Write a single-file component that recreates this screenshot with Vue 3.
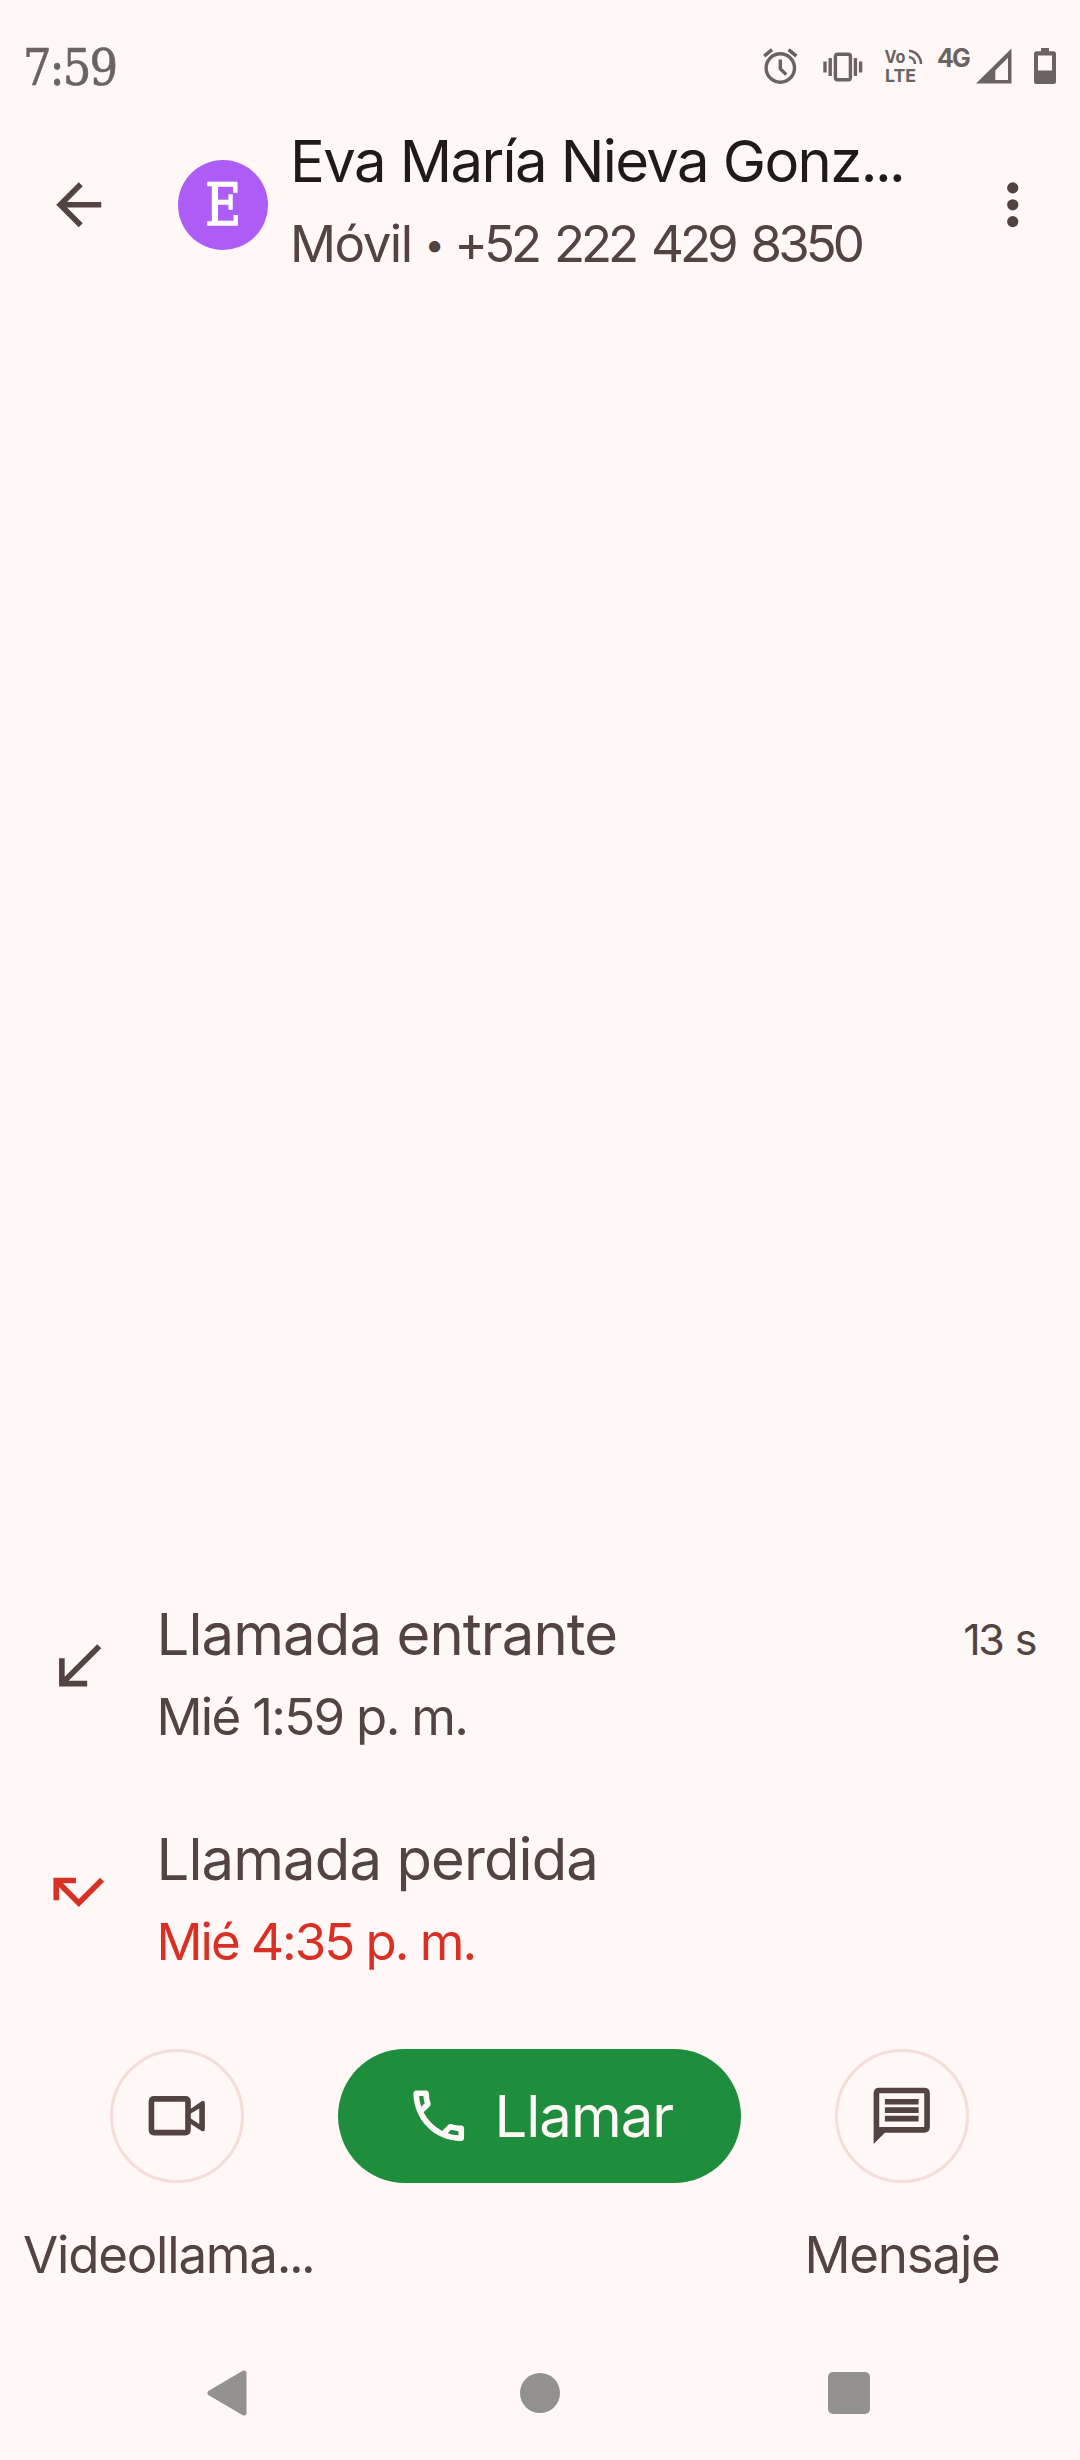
<template>
  <div class="screen">
    <div class="status-bar">
      <span class="clock">7:59</span>
      <div class="status-icons">
        <svg class="alarm" width="35" height="36" viewBox="0 0 35 36" fill="none" stroke="#696462">
          <circle cx="17.3" cy="20" r="14.2" stroke-width="3.4" />
          <path d="M17.3 11.5v9.3l6 5.8" stroke-width="3.4" />
          <path d="M1.2 8.2 9 1.7M25.6 1.7l7.8 6.5" stroke-width="3.6" />
        </svg>
        <svg class="vibrate" width="40" height="30" viewBox="0 0 40 30" fill="none" stroke="#696462" stroke-width="3.4">
          <rect x="12.4" y="2.2" width="15" height="25.6" rx="2" />
          <path d="M2 9.5v11M7.2 6v18M32.4 6v18M37.6 9.5v11" />
        </svg>
        <svg class="volte" width="42" height="48" viewBox="-2 -6 42 48">
          <text x="-0.5" y="14.500" textLength="21" lengthAdjust="spacingAndGlyphs">Vo</text>
          <text x="0" y="34.200" textLength="31" lengthAdjust="spacingAndGlyphs">LTE</text>
          <path d="M24 9a7 7 0 0 1 6 7M24 2.800a13 13 0 0 1 12 13.200" fill="none" stroke="#696462" stroke-width="2.600" />
        </svg>
        <span class="network">4G</span>
        <svg class="signal" width="36" height="36" viewBox="0 0 36 36">
          <path fill="#696462" fill-rule="evenodd" d="M35.500.5v35H0zM32 9.800 19.300 22.500V32H32z" />
        </svg>
        <svg class="battery" width="22" height="36" viewBox="0 0 22 36">
          <path fill="#696462" fill-rule="evenodd" d="M7 0h8v3.300h4.500Q22 3.300 22 5.800v27.700q0 2.500-2.500 2.500h-17Q0 36 0 33.500V5.800q0-2.500 2.500-2.500H7zM4 7.500V22.500h14V7.500z" />
        </svg>
      </div>
    </div>

    <header class="header">
      <svg class="icon back" viewBox="0 0 24 24">
        <path d="M20 11H7.830l5.590-5.590L12 4l-8 8 8 8 1.410-1.410L7.830 13H20z" />
      </svg>
      <div class="avatar"><span>E</span></div>
      <div class="contact">
        <h1>Eva María Nieva Gonz<span class="dots">...</span></h1>
        <p>Móvil <span class="bullet">•</span> <span class="phone">+52 222 429 8350</span></p>
      </div>
      <svg class="icon more" viewBox="0 0 24 24">
        <circle cx="12" cy="6" r="2" />
        <circle cx="12" cy="12" r="2" />
        <circle cx="12" cy="18" r="2" />
      </svg>
    </header>

    <main class="call-log">
      <div v-for="call in calls" :key="call.time" class="call" :class="{ missed: call.missed }">
        <svg class="icon" viewBox="0 0 24 24">
          <path :d="call.icon" />
        </svg>
        <div class="call-info">
          <h2>{{ call.title }}</h2>
          <p>{{ call.time }}</p>
        </div>
        <span class="duration">{{ call.duration }}</span>
      </div>
    </main>

    <section class="actions">
      <div class="action video">
        <button class="round">
          <svg class="icon" viewBox="0 0 24 24">
            <path fill-rule="evenodd" d="M4 5h11q2 0 2 2v2.500l3.600-2.500Q22 6.100 22 7.700v8.800q0 1.600-1.400.7L17 14.900V17q0 2-2 2H4q-2 0-2-2V7q0-2 2-2zm0 2v10h11V7zm13 4.200v1.800l3 1.900V9.400z" />
          </svg>
        </button>
        <span class="label">Videollama<span class="dots">...</span></span>
      </div>
      <button class="call-button">
        <svg class="icon" viewBox="0 0 24 24">
          <path d="M6.540 5c.060.890.210 1.760.450 2.590l-1.200 1.200c-.410-1.200-.670-2.470-.760-3.790h1.510m9.860 12.020c.850.240 1.720.390 2.600.450v1.490c-1.320-.090-2.590-.350-3.800-.750l1.200-1.190M7.500 3H4c-.550 0-1 .450-1 1 0 9.390 7.610 17 17 17 .550 0 1-.450 1-1v-3.490c0-.550-.450-1-1-1-1.240 0-2.450-.200-3.570-.570a.84.84 0 0 0-.310-.050c-.260 0-.510.100-.710.290l-2.200 2.200a15.150 15.150 0 0 1-6.590-6.590l2.200-2.200c.280-.280.360-.670.250-1.020A11.360 11.360 0 0 1 8.500 4c0-.550-.450-1-1-1z" />
        </svg>
        <span>Llamar</span>
      </button>
      <div class="action">
        <button class="round">
          <svg class="icon" viewBox="0 0 24 24">
            <path fill-rule="evenodd" d="M4 2h16q2 0 2 2v12q0 2-2 2H6l-4 4V4q0-2 2-2zm0 2v12h16V4zM6 6h12v2H6zm0 3h12v2H6zm0 3h12v2H6z" />
          </svg>
        </button>
        <span class="label">Mensaje</span>
      </div>
    </section>

    <nav class="nav-bar">
      <svg width="40" height="46" viewBox="0 0 40 46">
        <path d="M37 3v40L3 23z" stroke-width="5" />
      </svg>
      <svg class="home" width="40" height="40" viewBox="0 0 40 40">
        <circle cx="20" cy="20" r="20" />
      </svg>
      <svg width="42" height="42" viewBox="0 0 42 42">
        <rect width="42" height="42" rx="5" />
      </svg>
    </nav>
  </div>
</template>

<script setup>
const calls = [
  {
    title: "Llamada entrante",
    time: "Mié 1:59 p. m.",
    duration: "13 s",
    missed: false,
    icon: "M20 5.410 18.590 4 7 15.590V9H5v10h10v-2H8.410z",
  },
  {
    title: "Llamada perdida",
    time: "Mié 4:35 p. m.",
    duration: "",
    missed: true,
    icon: "M19.590 7 12 14.590 6.410 9H11V7H3v8h2v-4.590l7 7 9-9z",
  },
];
</script>

<style>
body {
  margin: 0;
  background: #fff8f6;
}
</style>

<style scoped>
.screen {
  display: flex;
  flex-direction: column;
  width: 1080px;
  height: 2460px;
  overflow: hidden;
  background: #fff8f6;
  color: #534341;
  font-family: Inter, "Liberation Sans", sans-serif;
}

h1,
h2,
p {
  margin: 0;
  font-weight: 400;
  line-height: 80px;
  white-space: nowrap;
}

button {
  padding: 0;
  border: 0;
  background: none;
  font-family: inherit;
}

.icon {
  flex: none;
  width: 67.5px;
  height: 67.5px;
  fill: #534341;
}

.status-bar {
  display: flex;
  flex: none;
  justify-content: space-between;
  box-sizing: border-box;
  height: 112px;
  padding: 48px 24px 0 23px;
  color: #696462;
}

.clock {
  margin-top: -12px;
  font-family: "DejaVu Serif Condensed", "DejaVu Serif", serif;
  font-stretch: condensed;
  font-size: 50px;
  line-height: 64px;
  letter-spacing: -2px;
  -webkit-text-stroke: 0.6px #696462;
}

.status-icons {
  display: flex;
  align-items: flex-start;
}

.alarm {
  margin-right: 25px;
}

.vibrate {
  margin: 4px 20px 0 0;
}

.volte {
  margin: -6px 12px 0 0;
  overflow: visible;
}

.volte text {
  fill: #696462;
  font-size: 17.5px;
  font-weight: 700;
}

.network {
  width: 33px;
  margin-right: 6px;
  font-size: 25px;
  font-weight: 700;
  line-height: 21px;
  letter-spacing: -2px;
}

.signal {
  margin-right: 22px;
}

.header {
  display: flex;
  flex: none;
  align-items: center;
  box-sizing: border-box;
  height: 185px;
  padding: 0 34px 0 45px;
}

.avatar {
  display: flex;
  align-items: center;
  justify-content: center;
  flex: none;
  width: 90px;
  height: 90px;
  margin: 0 22px 0 65.5px;
  border-radius: 50%;
  background: #ae5cf6;
  color: #fff;
  font-family: "DejaVu Serif Condensed", "DejaVu Serif", serif;
  font-stretch: condensed;
  font-size: 58px;
  line-height: 90px;
  -webkit-text-stroke: 1.4px #fff;
}

.avatar span {
  transform: scaleX(0.94);
}

.contact {
  flex: 1;
  margin-top: -4px;
}

.contact h1 {
  color: #211a19;
  font-size: 58px;
  letter-spacing: -1.6px;
}

.dots {
  letter-spacing: -2.5px;
}

.contact p {
  margin-top: 3px;
  font-size: 51px;
  letter-spacing: -1.5px;
}

.bullet {
  display: inline-block;
  width: 17px;
  font-size: 36px;
  line-height: 36px;
  text-align: center;
  vertical-align: 5px;
}

.phone {
  letter-spacing: -4px;
  word-spacing: 5.5px;
}

.call-log {
  display: flex;
  flex: 1;
  flex-direction: column;
  justify-content: flex-end;
}

.call {
  display: flex;
  align-items: flex-start;
  box-sizing: border-box;
  height: 225px;
  padding: 32px 45px 0 45px;
}

.call .icon {
  margin-top: 39px;
}

.call-info {
  flex: 1;
  margin-left: 44px;
}

.call-info h2 {
  font-size: 58px;
  letter-spacing: -0.9px;
}

.call-info p {
  margin-top: 3px;
  font-size: 51px;
  letter-spacing: -1.7px;
}

.missed .icon {
  fill: #d93025;
}

.missed p {
  color: #d93025;
  letter-spacing: -2px;
}

.duration {
  margin-top: 5px;
  font-size: 43px;
  line-height: 80px;
  letter-spacing: -2.5px;
  word-spacing: 3px;
}

.actions {
  display: flex;
  flex: none;
  align-items: flex-start;
  gap: 8px;
  box-sizing: border-box;
  height: 314px;
  padding: 37px 24px 0 24px;
}

.action {
  display: flex;
  flex: none;
  flex-direction: column;
  align-items: center;
  gap: 32px;
  width: 306px;
}

.round {
  display: flex;
  align-items: center;
  justify-content: center;
  box-sizing: border-box;
  width: 134px;
  height: 134px;
  border: 3px solid #f5ddda;
  border-radius: 50%;
}

.label {
  font-size: 51px;
  line-height: 80px;
  letter-spacing: -1.2px;
}

.video .label {
  align-self: flex-start;
  margin-left: -1px;
}

.call-button {
  display: flex;
  align-items: center;
  box-sizing: border-box;
  width: 403px;
  height: 134px;
  padding-left: 67px;
  border-radius: 67px;
  background: #1e8e3e;
  color: #fff8f6;
  font-size: 58px;
}

.call-button .icon {
  margin-right: 22px;
  fill: #fff8f6;
}

.call-button span {
  letter-spacing: -1px;
}

.nav-bar {
  display: flex;
  flex: none;
  align-items: center;
  justify-content: space-between;
  box-sizing: border-box;
  height: 134px;
  padding: 0 210px 0 207px;
}

.nav-bar svg {
  fill: #939290;
  stroke: #939290;
  stroke-width: 0;
  stroke-linejoin: round;
}

.nav-bar .home {
  margin-left: 5px;
}
</style>
